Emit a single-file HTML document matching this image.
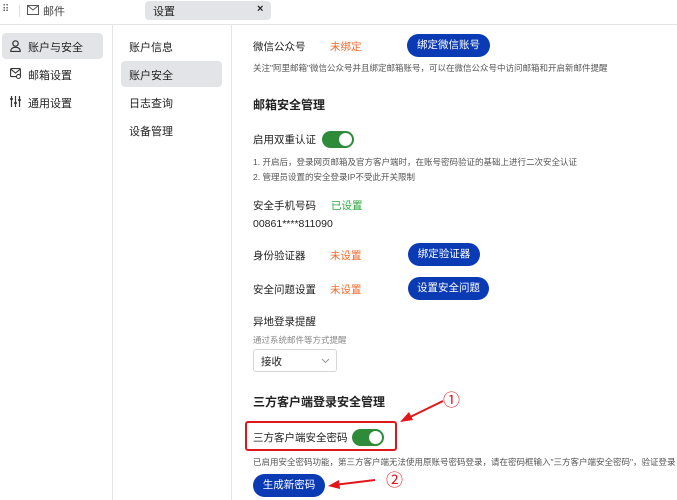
<!DOCTYPE html>
<html><head><meta charset="utf-8"><style>
*{margin:0;padding:0;box-sizing:border-box}
body{width:677px;height:500px;overflow:hidden;background:#fff;font-family:"Liberation Sans","Noto Sans CJK SC",sans-serif;color:#222;position:relative;font-size:10.5px}
.a{position:absolute;white-space:nowrap}
.btn{position:absolute;background:#0a3bb5;color:#fff;border-radius:12px;text-align:center;line-height:23px;height:23px;font-size:10.5px}
.tg{position:absolute;width:32px;height:17px;border-radius:9px;background:#2e8b3a}
.tg:after{content:"";position:absolute;right:2px;top:2px;width:13px;height:13px;border-radius:50%;background:#fff}
.s{font-size:8.5px;color:#555}
.o{color:#f06a2c}
.l{font-size:10.5px}
</style></head><body>
<div class="a" style="left:2px;top:4px;font-size:10px;color:#666;letter-spacing:-1px">⠿</div>
<div class="a" style="left:19px;top:5px;width:1px;height:12px;background:#ddd"></div>
<svg class="a" style="left:27px;top:5px" width="12" height="10" viewBox="0 0 12 10"><rect x="0.5" y="0.5" width="11" height="9" fill="none" stroke="#555"/><path d="M0.5 0.5 L6 5 L11.5 0.5" fill="none" stroke="#555"/></svg>
<div class="a" style="left:43px;top:3px;font-size:11px;color:#444">邮件</div>
<div class="a" style="left:145px;top:1px;width:126px;height:19px;background:#e3e4e7;border-radius:4px"></div>
<div class="a" style="left:153px;top:3px;font-size:11px">设置</div>
<div class="a" style="left:257px;top:3px;font-size:11px;font-weight:bold">×</div>
<div class="a" style="left:0;top:24px;width:677px;height:1px;background:#e5e5e5"></div>
<div class="a" style="left:112px;top:25px;width:1px;height:475px;background:#e5e5e5"></div>
<div class="a" style="left:231px;top:25px;width:1px;height:475px;background:#e5e5e5"></div>
<div class="a" style="left:2px;top:33px;width:101px;height:26px;background:#e3e4e7;border-radius:4px"></div>
<svg class="a" style="left:10px;top:40px" width="11" height="12" viewBox="0 0 11 12"><circle cx="5.5" cy="3.5" r="2.7" fill="none" stroke="#333" stroke-width="1.2"/><path d="M0.8 11.5 Q0.8 7.3 5.5 7.3 Q10.2 7.3 10.2 11.5 Z" fill="none" stroke="#333" stroke-width="1.2"/></svg>
<div class="a" style="left:28px;top:39px;font-size:11px">账户与安全</div>
<svg class="a" style="left:10px;top:68px" width="11" height="11" viewBox="0 0 11 11"><rect x="0.6" y="0.6" width="9.8" height="8" rx="1" fill="none" stroke="#333" stroke-width="1.1"/><path d="M0.6 1 L5.5 5 L10.4 1" fill="none" stroke="#333" stroke-width="1.1"/><circle cx="8.5" cy="8.5" r="2" fill="#fff" stroke="#333"/></svg>
<div class="a" style="left:28px;top:67px;font-size:11px">邮箱设置</div>
<svg class="a" style="left:10px;top:96px" width="11" height="11" viewBox="0 0 11 11"><path d="M1.5 0 V11 M5.5 0 V11 M9.5 0 V11" stroke="#333" stroke-width="1.2"/><path d="M0 3 H3 M4 7 H7 M8 4 H11" stroke="#333" stroke-width="1.5"/></svg>
<div class="a" style="left:28px;top:95px;font-size:11px">通用设置</div>
<div class="a" style="left:129px;top:39px;font-size:11px">账户信息</div>
<div class="a" style="left:121px;top:61px;width:101px;height:26px;background:#e3e4e7;border-radius:4px"></div>
<div class="a" style="left:129px;top:67px;font-size:11px">账户安全</div>
<div class="a" style="left:129px;top:95px;font-size:11px">日志查询</div>
<div class="a" style="left:129px;top:123px;font-size:11px">设备管理</div>
<div class="a l" style="left:253px;top:39px">微信公众号</div>
<div class="a o l" style="left:330px;top:39px">未绑定</div>
<div class="btn" style="left:407px;top:34px;width:83px">绑定微信账号</div>
<div class="a s" style="left:253px;top:62px">关注"阿里邮箱"微信公众号并且绑定邮箱账号，可以在微信公众号中访问邮箱和开启新邮件提醒</div>
<div class="a" style="left:253px;top:96px;font-size:12px;font-weight:bold">邮箱安全管理</div>
<div class="a l" style="left:253px;top:132px">启用双重认证</div>
<div class="tg" style="left:322px;top:131px"></div>
<div class="a s" style="left:253px;top:156px">1. 开启后，登录网页邮箱及官方客户端时，在账号密码验证的基础上进行二次安全认证</div>
<div class="a s" style="left:253px;top:171px">2. 管理员设置的安全登录IP不受此开关限制</div>
<div class="a l" style="left:253px;top:198px">安全手机号码</div>
<div class="a l" style="left:331px;top:198px;color:#2aa83a">已设置</div>
<div class="a l" style="left:253px;top:218px">00861****811090</div>
<div class="a l" style="left:253px;top:248px">身份验证器</div>
<div class="a o l" style="left:330px;top:248px">未设置</div>
<div class="btn" style="left:408px;top:243px;width:72px">绑定验证器</div>
<div class="a l" style="left:253px;top:282px">安全问题设置</div>
<div class="a o l" style="left:330px;top:282px">未设置</div>
<div class="btn" style="left:408px;top:277px;width:81px">设置安全问题</div>
<div class="a l" style="left:253px;top:314px">异地登录提醒</div>
<div class="a s" style="left:253px;top:334px;color:#888">通过系统邮件等方式提醒</div>
<div class="a" style="left:253px;top:349px;width:84px;height:23px;border:1px solid #d5d5d5;border-radius:3px"></div>
<div class="a l" style="left:261px;top:354px">接收</div>
<svg class="a" style="left:321px;top:358px" width="9" height="6" viewBox="0 0 9 6"><path d="M1 1 L4.5 4.5 L8 1" fill="none" stroke="#999"/></svg>
<div class="a" style="left:253px;top:393px;font-size:12px;font-weight:bold">三方客户端登录安全管理</div>
<div class="a" style="left:245px;top:421px;width:152px;height:30px;border:2px solid #e0161b;border-radius:3px"></div>
<div class="a l" style="left:253px;top:430px">三方客户端安全密码</div>
<div class="tg" style="left:352px;top:429px"></div>
<div class="a s" style="left:253px;top:456px">已启用安全密码功能，第三方客户端无法使用原账号密码登录，请在密码框输入"三方客户端安全密码"，验证登录</div>
<div class="btn" style="left:253px;top:474px;width:72px;height:23px">生成新密码</div>
<svg class="a" style="left:0;top:0" width="677" height="500">
<path d="M443 401 L404 420" stroke="#e0161b" stroke-width="2"/>
<path d="M400 422 L409 412 L413 420 Z" fill="#e0161b"/>
<path d="M375 480 L334 485" stroke="#e0161b" stroke-width="2"/>
<path d="M328 486 L339 480 L340 489 Z" fill="#e0161b"/>
</svg>
<div class="a" style="left:443px;top:386px;font-size:17px;color:#e0161b">①</div>
<div class="a" style="left:386px;top:466px;font-size:17px;color:#e0161b">②</div>
</body></html>
